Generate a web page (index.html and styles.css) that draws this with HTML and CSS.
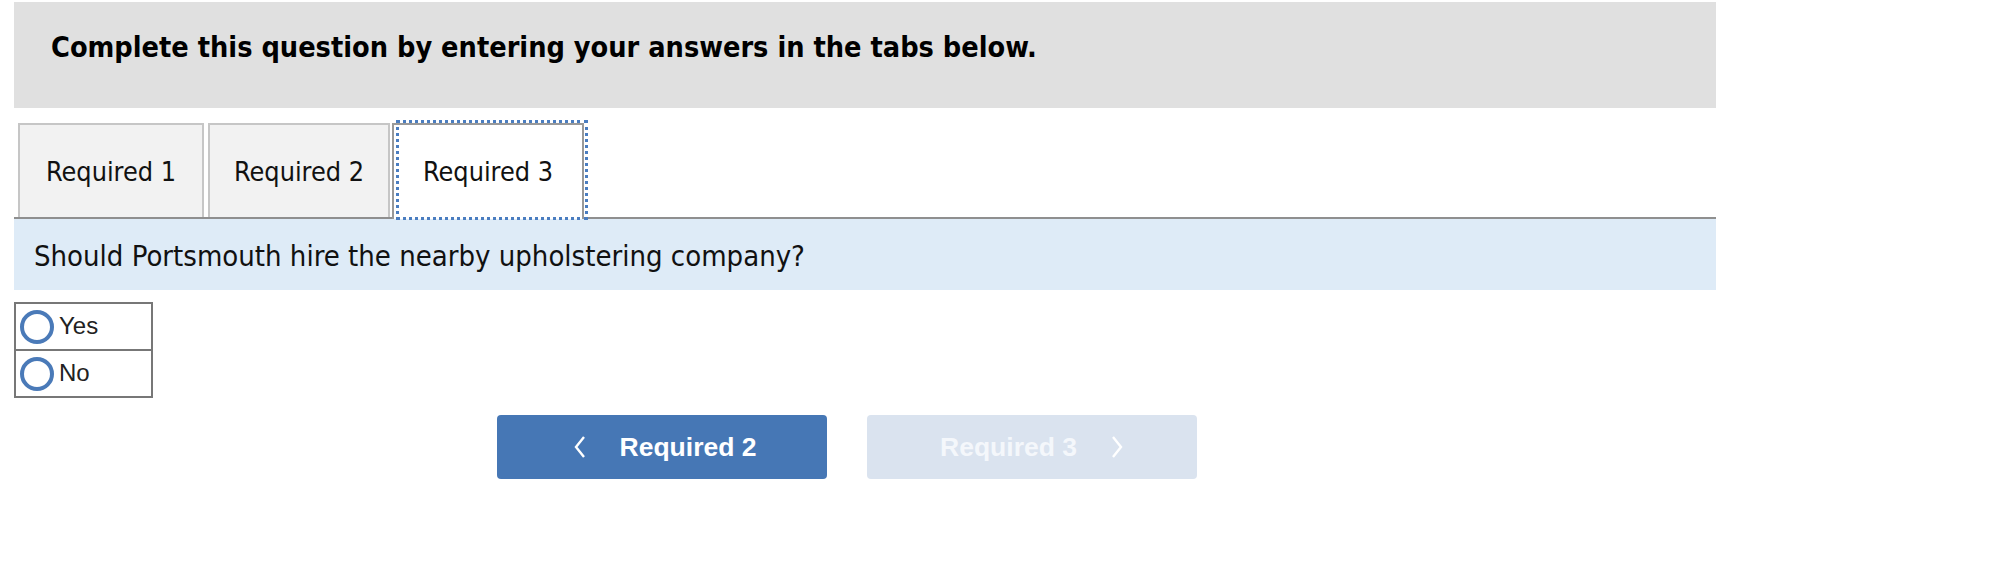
FILE: index.html
```html
<!DOCTYPE html>
<html>
<head>
<meta charset="utf-8">
<link rel="stylesheet" href="styles.css">
</head>
<body>
<div class="page">
  <div class="banner">
    <h1 class="banner-title">Complete this question by entering your answers in the tabs below.</h1>
  </div>
  <div class="tabs">
    <div class="tab">Required 1</div>
    <div class="tab">Required 2</div>
    <div class="tab tab-active">Required 3</div>
  </div>
  <div class="question">Should Portsmouth hire the nearby upholstering company?</div>
  <div class="choices">
    <label class="choice"><span class="radio"></span><span class="choice-text">Yes</span></label>
    <label class="choice"><span class="radio"></span><span class="choice-text">No</span></label>
  </div>
  <div class="nav">
    <button class="nav-btn nav-prev"><span class="chev">
      <svg width="14" height="24" viewBox="0 0 14 24"><path d="M11 2 L3 12 L11 22" fill="none" stroke="#fff" stroke-width="2.4"/></svg>
    </span><span class="nav-label">Required 2</span></button>
    <button class="nav-btn nav-next"><span class="nav-label">Required 3</span><span class="chev">
      <svg width="14" height="24" viewBox="0 0 14 24"><path d="M3 2 L11 12 L3 22" fill="none" stroke="#fff" stroke-width="2.4"/></svg>
    </span></button>
  </div>
</div>
</body>
</html>
```
FILE: styles.css
```css
html, body {
  margin: 0;
  padding: 0;
  background: #ffffff;
}

.page {
  width: 1702px;
  margin-left: 14px;
  padding-top: 2px;
  font-family: "DejaVu Sans Condensed", "DejaVu Sans", sans-serif;
  font-stretch: condensed;
  color: #111;
}

.banner {
  background: #e0e0e0;
  height: 106px;
  display: flex;
  align-items: center;
  padding-left: 37px;
  box-sizing: border-box;
  padding-bottom: 16px;
}

.banner-title {
  margin: 0;
  font-size: 28.6px;
  font-weight: bold;
  color: #000;
}

.tabs {
  margin-top: 15px;
  display: flex;
  padding-left: 4px;
  gap: 4px;
  border-bottom: 2px solid #8f8f8f;
}

.tab {
  position: relative;
  width: 186px;
  height: 94px;
  box-sizing: border-box;
  border: 2px solid #c6c6c6;
  border-bottom: none;
  background: #f2f2f2;
  display: flex;
  align-items: center;
  justify-content: center;
  font-size: 26.8px;
  color: #111;
}

.tab + .tab {
  width: 182px;
}

.tab-active {
  width: 192px !important;
  height: 96px;
  margin-bottom: -2px;
  margin-left: -2px;
  border-color: #999;
  background: #fff;
  padding-bottom: 2px;
}

.tab-active::after {
  content: "";
  position: absolute;
  left: 2px;
  right: -6px;
  top: -5px;
  bottom: -1px;
  border: 3px dotted #4a7dc0;
}

.question {
  background: #deebf7;
  height: 71px;
  display: flex;
  align-items: center;
  padding-left: 20px;
  padding-top: 3px;
  font-size: 29px;
  color: #111;
  box-sizing: border-box;
}

.choices {
  margin-top: 12px;
  width: 139px;
  box-sizing: border-box;
  border: 2px solid #777;
  font-family: "Liberation Sans", Arial, sans-serif;
  font-stretch: normal;
}

.choice {
  display: flex;
  align-items: center;
  height: 45px;
  padding-left: 4px;
  gap: 5px;
}

.choice + .choice {
  border-top: 2px solid #777;
}

.radio {
  width: 34px;
  height: 34px;
  box-sizing: border-box;
  border: 4px solid #4a7ab8;
  border-radius: 50%;
}

.choice-text {
  font-size: 24px;
  color: #222;
  margin-top: -2px;
}

.nav {
  margin-top: 17px;
  padding-left: 483px;
  display: flex;
  gap: 40px;
}

.nav-btn {
  width: 330px;
  height: 64px;
  border: none;
  border-radius: 4px;
  display: flex;
  align-items: center;
  justify-content: center;
  gap: 33px;
  font-family: "Liberation Sans", Arial, sans-serif;
  font-weight: bold;
  font-size: 26.5px;
  color: #fff;
  padding: 0;
}

.nav-prev {
  background: #4677b5;
  padding-left: 5px;
}

.nav-next {
  background: #dae3ef;
  color: #f4f7fb;
}

.chev {
  display: flex;
  align-items: center;
}
```
